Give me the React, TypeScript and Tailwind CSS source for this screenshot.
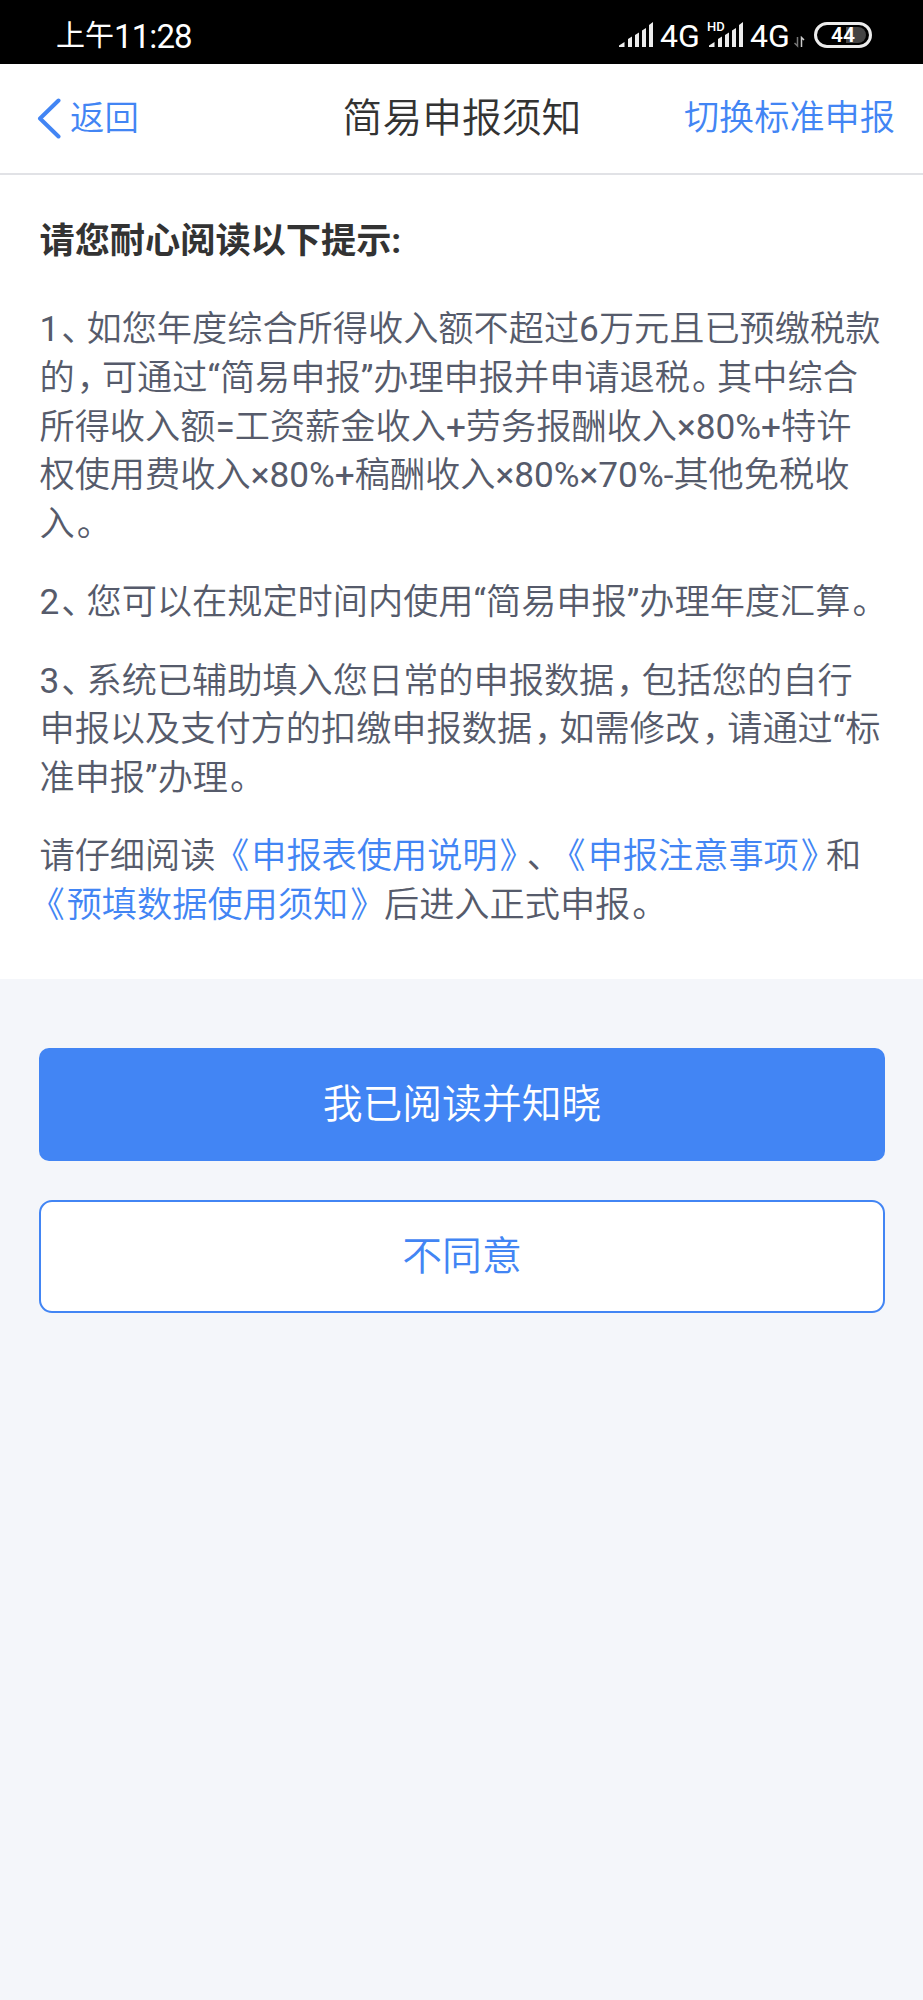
import { Fragment } from 'react';
import type { ReactNode } from 'react';

const closing = "ml-[2px] mr-[7.6px] [font-feature-settings:'halt']";
const opening = "ml-[7.5px] mr-[2.1px] [font-feature-settings:'halt']";

// Full-width punctuation is set tighter than a full em, digits and quotes a little heavier
function Text({ children }: { children: string }) {
  return (
    <>
      {children.split(/([、，。》《]|[\d%×+=“”-]+)/).map((part, i) => {
        if (part === '《') return <span key={i} className={`inline-block ${opening}`}>{part}</span>;
        if (/^[、，。》]$/.test(part)) return <span key={i} className={`inline-block ${closing}`}>{part}</span>;
        if (/^[\d%×+=“”-]+$/.test(part)) return <span key={i} className="font-normal">{part}</span>;
        return <Fragment key={i}>{part}</Fragment>;
      })}
    </>
  );
}

function DocLink({ children }: { children: string }) {
  return (
    <a href="#" className="text-[#4285f4]">
      <Text>{children}</Text>
    </a>
  );
}

function Paragraph({ lines }: { lines: ReactNode[] }) {
  return (
    <p className="whitespace-pre">
      {lines.map((line, i) => (
        <span key={i} className="block">{line}</span>
      ))}
    </p>
  );
}

function Signal() {
  return (
    <svg width="35" height="26" viewBox="0 0 35 26" fill="#ececec">
      <path d="M0 25V23.5L5.5 20V25ZM9 25V17L13 14.5V25ZM16 25V13L20 10.5V25ZM23 25V8.5L27 6V25ZM30 25V3L34 0V25Z" />
    </svg>
  );
}

function StatusBar() {
  return (
    <div className="flex h-16 items-center bg-black pl-14 pr-[51px] text-white">
      <div className="flex items-center whitespace-nowrap pt-2 leading-none">
        <span className="text-[29px]">上午</span>
        <span className="text-[33px] tracking-[-0.9px]">11:28</span>
      </div>
      <div className="ml-auto mt-1.5 flex h-[26px] items-end">
        <Signal />
        <span className="ml-[6px] w-[42px] text-[32px] leading-[23px]">4G</span>
        <div className="ml-[7px] flex">
          <div className="relative flex">
            <Signal />
            <span className="absolute -left-0.5 -top-px bg-black pr-px text-[13px] font-medium leading-[11px]">HD</span>
          </div>
        </div>
        <span className="ml-[6px] w-[42px] text-[32px] leading-[23px]">4G</span>
        <svg className="ml-[2px]" width="11" height="12" viewBox="0 0 11 12" fill="none" strokeWidth="1.5">
          <path d="M3.5 1V10L0.5 7" stroke="#777" />
          <path d="M7.5 11V1.5L10 4" stroke="#ccc" />
        </svg>
        <div className="relative ml-[9px] flex h-[26px] w-[58px] items-center justify-center rounded-full border-[3px] border-[#ececec]">
          <div className="absolute right-[3px] top-[2px] h-4 w-[20px] rounded-r-full bg-[#444]" />
          <span className="relative text-[21px] font-semibold leading-none">44</span>
        </div>
      </div>
    </div>
  );
}

function Header() {
  return (
    <header className="grid h-[111px] grid-cols-3 items-center whitespace-nowrap border-b-2 border-[#e1e2e6] bg-white pl-[37px] pr-[28px] font-[350]">
      <a href="#" className="flex items-center gap-[9px] text-[34.4px] text-[#4285f4]">
        <svg width="24" height="41" viewBox="0 0 24 41" fill="none" stroke="currentColor" strokeWidth="4" strokeLinecap="round" strokeLinejoin="round">
          <path d="M21.5 2.5L3 20.5L21.5 38.5" />
        </svg>
        返回
      </a>
      <h1 className="pr-[8px] text-center text-[39.8px] text-[#333]">简易申报须知</h1>
      <a href="#" className="text-right text-[35.2px] text-[#4285f4]">切换标准申报</a>
    </header>
  );
}

export default function App() {
  return (
    <div className="min-h-[2000px] w-[923px] bg-[#f4f6fa] font-[Roboto,'Noto_Sans_CJK_SC',sans-serif] [text-spacing-trim:space-all]">
      <StatusBar />
      <Header />
      <main className="h-[804px] bg-white pl-[39.5px] pt-[41.5px] text-[35.2px] leading-[48.7px] text-[#565b6b]">
        <h2 className="font-bold text-[#333]">请您耐心阅读以下提示:</h2>
        <div className="mt-[40px] flex flex-col gap-[29.6px] font-[350]">
          <Paragraph
            lines={[
              <Text>1、如您年度综合所得收入额不超过6万元且已预缴税款</Text>,
              <Text>的，可通过“简易申报”办理申报并申请退税。其中综合</Text>,
              <Text>所得收入额=工资薪金收入+劳务报酬收入×80%+特许</Text>,
              <Text>权使用费收入×80%+稿酬收入×80%×70%-其他免税收</Text>,
              <Text>入。</Text>,
            ]}
          />
          <Paragraph lines={[<Text>2、您可以在规定时间内使用“简易申报”办理年度汇算。</Text>]} />
          <Paragraph
            lines={[
              <Text>3、系统已辅助填入您日常的申报数据，包括您的自行</Text>,
              <Text>申报以及支付方的扣缴申报数据，如需修改，请通过“标</Text>,
              <Text>准申报”办理。</Text>,
            ]}
          />
          <Paragraph
            lines={[
              <>
                请仔细阅读 <DocLink>《申报表使用说明》</DocLink><Text>、 </Text>
                <DocLink>《申报注意事项》</DocLink>和
              </>,
              <>
                <DocLink>《预填数据使用须知》</DocLink><Text> 后进入正式申报。</Text>
              </>,
            ]}
          />
        </div>
      </main>
      <div className="flex flex-col gap-[39px] pl-[39px] pr-[38px] pt-[69px] text-[39.8px] font-[350]">
        <button className="h-[113px] rounded-[10px] bg-[#4285f4] text-white">我已阅读并知晓</button>
        <button className="h-[113px] rounded-[13px] border-2 border-[#4285f4] bg-white text-[#4285f4]">不同意</button>
      </div>
    </div>
  );
}
